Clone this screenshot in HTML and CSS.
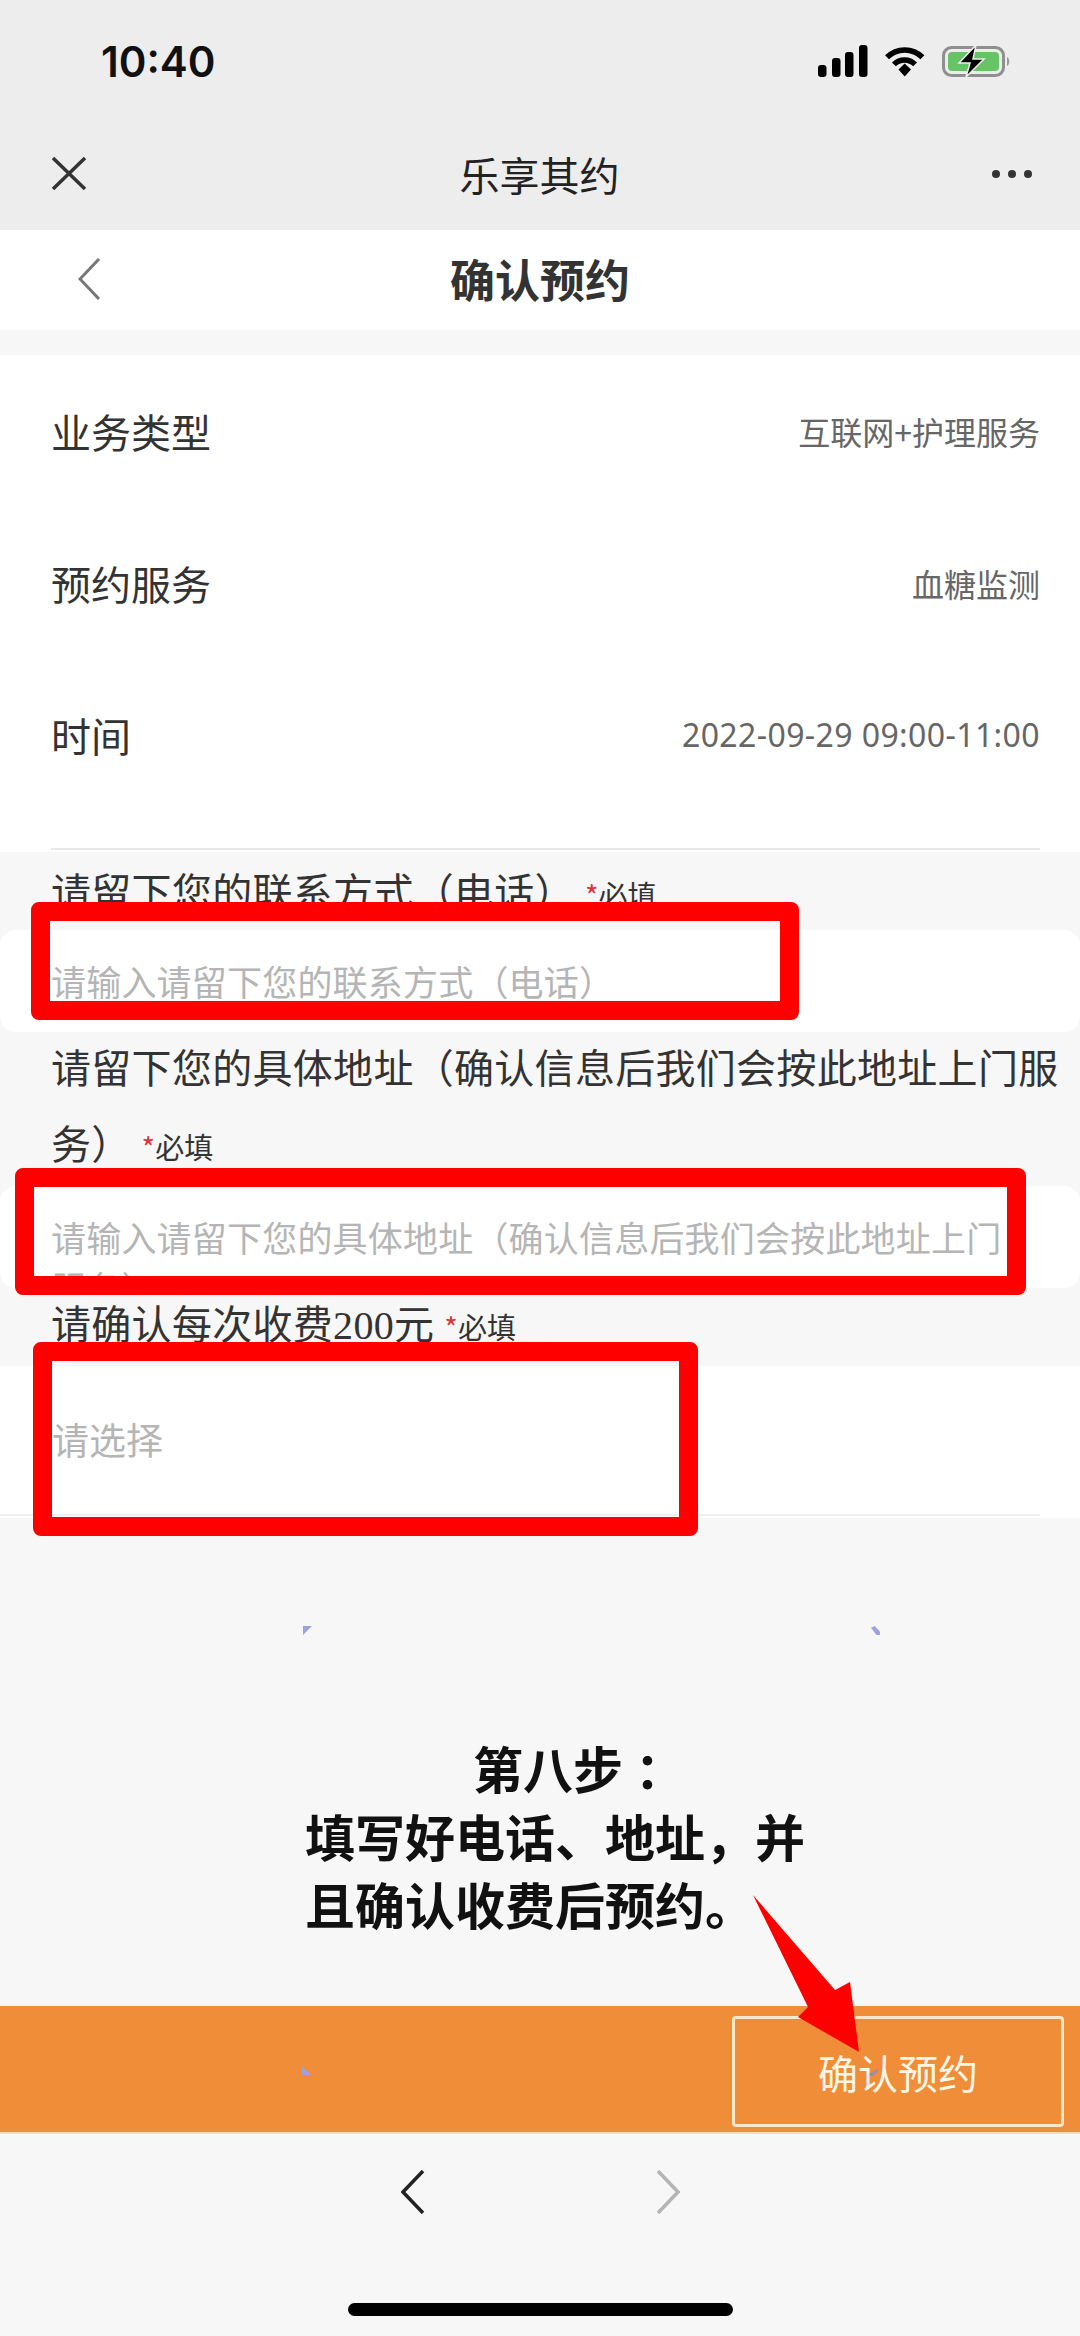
FILE: index.html
```html
<!DOCTYPE html>
<html lang="zh-CN">
<head>
  <meta charset="UTF-8">
  <title>确认预约</title>
  <link rel="stylesheet" href="styles.css">
</head>
<body>

  <div class="page">
    <div class="status">
      <span class="time">10:40</span>
      <div class="status-icons">
        <svg width="50" height="32" viewBox="0 0 50 32">
          <rect x="0" y="20" width="8.5" height="12" rx="3"/>
          <rect x="14" y="13" width="8.5" height="19" rx="3"/>
          <rect x="27" y="7" width="8.5" height="25" rx="3"/>
          <rect x="41" y="0" width="8.5" height="32" rx="3"/>
        </svg>
        <svg width="42" height="31" viewBox="0 0 42 31">
          <path d="M3 11.3A25 25 0 0 1 38.4 11.3M9.9 18.4A15 15 0 0 1 31.1 18.4" fill="none" stroke="#000" stroke-width="5.5"/>
          <path d="M14.5 23.5L20.7 17.5L27 23.5L20.7 30.5Z"/>
        </svg>
        <svg width="70" height="33" viewBox="0 0 70 33">
          <rect x="1.5" y="2.5" width="60" height="28" rx="8" fill="none" stroke="#8f8f8f" stroke-width="3"/>
          <rect x="6" y="7" width="51" height="19" rx="4" fill="#66c466"/>
          <path d="M65 12c3 1 3 8 0 9z" fill="#999"/>
          <path d="M34 0L17 18H28L24 32L42 14H31Z" stroke="#ededed" stroke-width="1.5"/>
        </svg>
      </div>
    </div>

    <div class="nav">
      <svg width="36" height="35" viewBox="0 0 36 35">
        <path d="M2 2L34 33M34 2L2 33" fill="none" stroke="#333" stroke-width="3.5"/>
      </svg>
      <span class="nav-title">乐享其约</span>
      <div class="dots"><i></i><i></i><i></i></div>
    </div>

    <div class="subbar">
      <svg class="subbar-back" width="23" height="42" viewBox="0 0 23 42">
        <path d="M21 1L2 21L21 41" fill="none" stroke="#777" stroke-width="3"/>
      </svg>
      <span class="subbar-title">确认预约</span>
    </div>

    <div class="info">
      <div class="info-row"><span>业务类型</span><span class="info-value">互联网+护理服务</span></div>
      <div class="info-row"><span>预约服务</span><span class="info-value">血糖监测</span></div>
      <div class="info-row"><span>时间</span><span class="info-value info-date">2022-09-29 09:00-11:00</span></div>
      <div class="info-line"></div>
    </div>

    <div class="label label-first">请留下您的联系方式（电话）<span class="req req-wide"><b>*</b>必填</span></div>
    <div class="field">请输入请留下您的联系方式（电话）</div>

    <div class="label">请留下您的具体地址（确认信息后我们会按此地址上门服务）<span class="req req-wide"><b>*</b>必填</span></div>
    <div class="field">请输入请留下您的具体地址（确认信息后我们会按此地址上门服务）</div>

    <div class="label">请确认每次收费<span class="num">200</span>元<span class="req"><b>*</b>必填</span></div>
    <div class="select"><div class="select-inner">请选择</div></div>

    <div class="spacer"></div>

    <div class="submit-bar">
      <div class="submit">确认预约</div>
    </div>

    <div class="bottom">
      <div class="arrows">
        <svg width="24" height="44" viewBox="0 0 24 44">
          <path d="M22 1L2 22L22 43" fill="none" stroke="#222" stroke-width="3.5"/>
        </svg>
        <svg width="24" height="44" viewBox="0 0 24 44">
          <path d="M2 1L22 22L2 43" fill="none" stroke="#b4b4b4" stroke-width="3.5"/>
        </svg>
      </div>
      <div class="home"></div>
    </div>

    <!-- annotations on top of the screenshot -->
    <div class="mark mark-phone"></div>
    <div class="mark mark-address"></div>
    <div class="mark mark-fee"></div>

    <div class="speck speck-a"></div>
    <div class="speck speck-b"></div>
    <div class="speck speck-c"></div>

    <div class="note">
      <div class="note-head">第八步<span class="note-colon">：</span></div>
      <div>填写好电话、地址，并</div>
      <div>且确认收费后预约。</div>
    </div>

    <svg class="pointer" width="120" height="165" viewBox="0 0 120 165">
      <path d="M3 0L85 95L100 87L109 157L48 122L58 112Z" fill="#fe0000"/>
    </svg>
    <div class="speck speck-d"></div>
  </div>

</body>
</html>
```

FILE: styles.css
```css
* {
  box-sizing: border-box;
}

body {
  margin: 0;
  background: #f7f7f7;
  color: #333;
  font-family: "Noto Sans CJK SC", "Noto Sans", sans-serif;
}

.page {
  position: relative;
  display: flex;
  flex-direction: column;
  width: 1080px;
  height: 2336px;
  overflow: hidden;
}

/* status bar + wechat title */
.status {
  display: flex;
  flex: none;
  align-items: center;
  justify-content: space-between;
  height: 122px;
  padding: 0 68px 0 101px;
  background: #ededed;
}

.time {
  font-family: Inter, sans-serif;
  font-size: 42px;
  font-weight: 600;
  color: #111;
}

.status-icons {
  display: flex;
  align-items: center;
  gap: 16px;
}

.nav {
  display: flex;
  flex: none;
  align-items: center;
  justify-content: space-between;
  height: 108px;
  padding: 0 48px 5px 51px;
  background: #ededed;
}

.nav-title {
  font-size: 40px;
  color: #222;
}

.dots {
  display: flex;
  gap: 8px;
}

.dots i {
  width: 8px;
  height: 8px;
  border-radius: 50%;
  background: #333;
}

.subbar {
  position: relative;
  display: flex;
  flex: none;
  align-items: center;
  justify-content: center;
  height: 100px;
  margin-bottom: 25px;
  padding-bottom: 4px;
  background: #fff;
}

.subbar-back {
  position: absolute;
  left: 78px;
  top: 28px;
}

.subbar-title {
  font-size: 45px;
  font-weight: 700;
  color: #333;
}

/* read only rows */
.info {
  flex: none;
  height: 497px;
  padding: 1px 40px 0 51px;
  background: #fff;
  font-size: 40px;
}

.info-row {
  display: flex;
  align-items: center;
  justify-content: space-between;
  height: 152px;
  padding-bottom: 3px;
}

.info-value {
  font-size: 32px;
  color: #666;
}

.info-date {
  font-family: "Noto Sans", sans-serif;
  letter-spacing: 0.4px;
}

.info-line {
  margin-top: 36px;
  border-top: 2px solid #e8e8e8;
}

/* form */
.label {
  flex: none;
  margin: -4px 0 6px;
  padding: 0 20px 0 51px;
  font-size: 40px;
  letter-spacing: 0.3px;
  line-height: 76px;
}

.label-first {
  margin: 0 0 2px;
}

.num {
  font-family: "Liberation Serif", serif;
  line-height: 1;
}

.req {
  margin-left: 10px;
  font-size: 29px;
  letter-spacing: 0;
  line-height: 1;
  color: #333;
}

.req-wide {
  margin-left: 10px;
}

.req b {
  font-weight: 400;
  color: #d9363e;
}

.field {
  flex: none;
  height: 102px;
  padding: 26px 70px 0 51px;
  overflow: hidden;
  border-radius: 16px;
  background: #fff;
  color: #b5b5b5;
  font-size: 35px;
  letter-spacing: 0.2px;
  line-height: 50px;
}

.select {
  flex: none;
  height: 152px;
  padding-right: 40px;
  background: #fff;
}

.select-inner {
  height: 150px;
  padding-left: 52px;
  border-bottom: 2px solid #f0f0f0;
  color: #b5b5b5;
  font-size: 37px;
  line-height: 146px;
}

.spacer {
  flex: 1;
}

.submit-bar {
  display: flex;
  flex: none;
  justify-content: flex-end;
  height: 128px;
  padding: 10px 16px 5px 0;
  background: #ef8d38;
  border-bottom: 2px solid #fbdcb6;
}

.submit {
  width: 332px;
  border: 3px solid #fbe8c8;
  border-radius: 4px;
  color: #fff6e6;
  font-size: 40px;
  line-height: 106px;
  text-align: center;
}

.bottom {
  flex: none;
  height: 202px;
  padding-top: 36px;
}

.arrows {
  display: flex;
  justify-content: center;
  gap: 231px;
}

.home {
  width: 385px;
  height: 13px;
  margin: 89px auto 0;
  border-radius: 7px;
  background: #000;
}

/* overlays */
.mark {
  position: absolute;
  border: 19px solid #fe0000;
  border-radius: 8px;
}

.mark-phone {
  left: 31px;
  top: 902px;
  width: 768px;
  height: 118px;
}

.mark-address {
  left: 15px;
  top: 1168px;
  width: 1011px;
  height: 127px;
}

.mark-fee {
  left: 33px;
  top: 1342px;
  width: 665px;
  height: 194px;
}

.speck {
  position: absolute;
  width: 9px;
  height: 9px;
  background: #9aa3dd;
  clip-path: polygon(0 0, 100% 0, 0 100%);
}

.speck-a {
  left: 303px;
  top: 1626px;
}

.speck-b {
  left: 871px;
  top: 1626px;
  clip-path: polygon(0 20%, 40% 0, 100% 60%, 100% 100%, 60% 100%);
}

.speck-c {
  left: 302px;
  top: 2066px;
  clip-path: polygon(0 0, 100% 100%, 0 100%);
}

.speck-d {
  left: 869px;
  top: 2068px;
  background: #9a8fa8;
  clip-path: polygon(100% 0, 100% 40%, 30% 100%, 0 70%);
}

.note {
  position: absolute;
  left: 305px;
  top: 1733px;
  color: #111;
  font-size: 50px;
  font-weight: 700;
  line-height: 68px;
  white-space: nowrap;
}

.note-head {
  padding-left: 168px;
}

.note-colon {
  margin-left: 12px;
}

.pointer {
  position: absolute;
  left: 750px;
  top: 1895px;
}
```
